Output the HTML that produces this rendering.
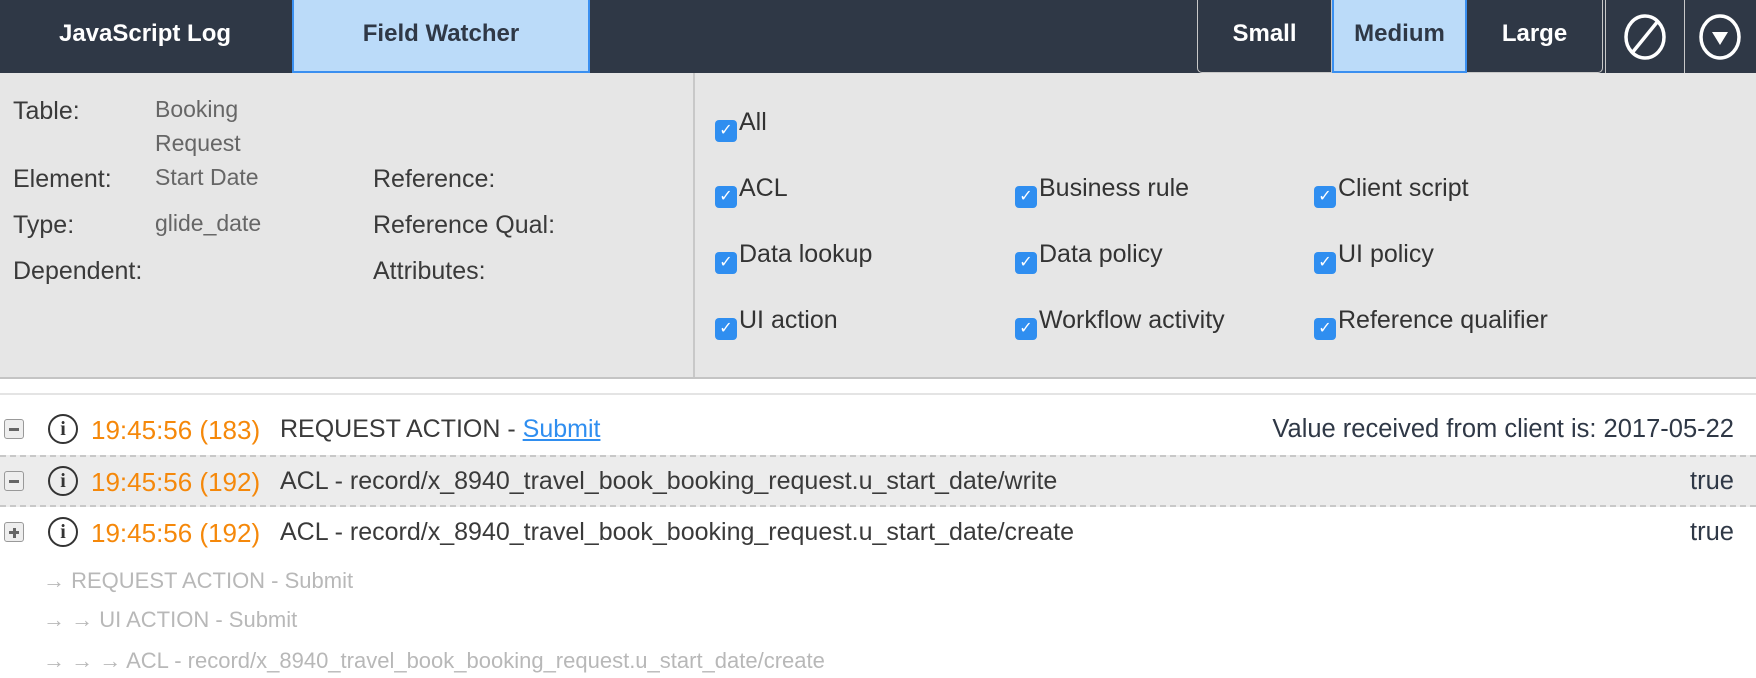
<!DOCTYPE html>
<html><head><meta charset="utf-8"><style>
*{margin:0;padding:0;box-sizing:border-box}
body{width:1756px;height:678px;overflow:hidden;background:#fff;font-family:"Liberation Sans",Arial,sans-serif;position:relative}
.a{position:absolute;white-space:nowrap}
#hdr{position:absolute;left:0;top:0;width:1756px;height:73px;background:#2f3846}
.tab{position:absolute;top:0;height:73px;line-height:67px;text-align:center;font-size:24px;font-weight:bold;color:#fff}
.btn{position:absolute;top:0;height:73px;line-height:68px;text-align:center;font-size:24px;font-weight:bold;color:#fff;border:1px solid #c8c8c8;border-top:none}
.sel{background:#bbdbf9;color:#2f3846;border:2px solid #3a8ff0;border-top:none}
#panel{position:absolute;left:0;top:73px;width:1756px;height:306px;background:#e6e6e6;border-bottom:2px solid #c4c4c4}
.lbl{font-size:25px;color:#3a3a3a}
.val{font-size:23px;color:#666}
.cb{position:absolute;font-size:25px;color:#333;white-space:nowrap}
.cb i{position:absolute;left:0;top:12px;width:22px;height:22px;background:#2f8ef0;border-radius:4px;color:#fff;font-style:normal;font-size:16px;text-align:center;line-height:22px}
.cb span{position:absolute;left:24px;top:0;white-space:nowrap}
.row{position:absolute;left:0;width:1756px;height:51px;font-size:25px;color:#3a3a3a;white-space:nowrap}
.ts{position:absolute;left:91px;top:12px;color:#f5880a;font-size:26px}
.msg{position:absolute;left:280px;top:12px}
.rt{position:absolute;right:22px;top:12px;color:#2f3846;font-size:25.5px}
.box{position:absolute;left:4px;top:16px;width:20px;height:20px;border:1px solid #999;border-radius:3px;background:#eee}
.box:after{content:"";position:absolute;left:4px;top:8px;width:10px;height:3px;background:#666}
.plus:before{content:"";position:absolute;left:7.5px;top:4.5px;width:3px;height:10px;background:#666}
.inf{position:absolute;left:48px;top:11px;width:30px;height:30px;border:2.5px solid #333;border-radius:50%;font-family:"Liberation Serif",serif;font-weight:bold;font-size:20px;text-align:center;line-height:26px;color:#333}
.sub{position:absolute;left:43px;font-size:22px;color:#b8b8b8;white-space:nowrap}
</style></head><body>
<div id="hdr">
<div class="tab" style="left:0;width:290px">JavaScript Log</div>
<div class="tab sel" style="left:292px;width:298px">Field Watcher</div>
<div class="btn" style="left:1197px;width:135px;border-radius:0 0 0 5px">Small</div>
<div class="btn sel" style="left:1332px;width:135px">Medium</div>
<div class="btn" style="left:1467px;width:136px;border-radius:0 0 5px 0;border-left:none">Large</div>
<div class="a" style="left:1605px;top:0;width:1px;height:73px;background:#c8c8c8"></div>
<div class="a" style="left:1684px;top:0;width:1px;height:73px;background:#c8c8c8"></div>
<svg class="a" style="left:1622px;top:13px" width="46" height="48" viewBox="0 0 46 48"><ellipse cx="23" cy="24" rx="19" ry="21" fill="none" stroke="#fff" stroke-width="3.5"/><line x1="10" y1="40" x2="36" y2="8" stroke="#fff" stroke-width="3.5"/></svg>
<svg class="a" style="left:1697px;top:13px" width="46" height="48" viewBox="0 0 46 48"><ellipse cx="23" cy="24" rx="19" ry="21" fill="none" stroke="#fff" stroke-width="3.5"/><path d="M15 19h16l-8 13z" fill="#fff"/></svg>
</div>
<div id="panel">
<div class="a lbl" style="left:13px;top:24px">Table:</div>
<div class="a val" style="left:155px;top:23px">Booking</div>
<div class="a val" style="left:155px;top:57px">Request</div>
<div class="a lbl" style="left:13px;top:92px">Element:</div>
<div class="a val" style="left:155px;top:91px">Start Date</div>
<div class="a lbl" style="left:373px;top:92px">Reference:</div>
<div class="a lbl" style="left:13px;top:138px">Type:</div>
<div class="a val" style="left:155px;top:137px">glide_date</div>
<div class="a lbl" style="left:373px;top:138px">Reference Qual:</div>
<div class="a lbl" style="left:13px;top:184px">Dependent:</div>
<div class="a lbl" style="left:373px;top:184px">Attributes:</div>
<div class="a" style="left:693px;top:0;width:2px;height:304px;background:#c8c8c8"></div>
<div class="cb" style="left:715px;top:35px"><i>✓</i><span>All</span></div>
<div class="cb" style="left:715px;top:101px"><i>✓</i><span>ACL</span></div>
<div class="cb" style="left:1015px;top:101px"><i>✓</i><span>Business rule</span></div>
<div class="cb" style="left:1314px;top:101px"><i>✓</i><span>Client script</span></div>
<div class="cb" style="left:715px;top:167px"><i>✓</i><span>Data lookup</span></div>
<div class="cb" style="left:1015px;top:167px"><i>✓</i><span>Data policy</span></div>
<div class="cb" style="left:1314px;top:167px"><i>✓</i><span>UI policy</span></div>
<div class="cb" style="left:715px;top:233px"><i>✓</i><span>UI action</span></div>
<div class="cb" style="left:1015px;top:233px"><i>✓</i><span>Workflow activity</span></div>
<div class="cb" style="left:1314px;top:233px"><i>✓</i><span>Reference qualifier</span></div>
</div>
<div class="a" style="left:0;top:393px;width:1756px;height:2px;background:#e4e4e4"></div>
<div class="row" style="top:403px"><div class="box"></div><div class="inf">i</div><div class="ts">19:45:56 (183)</div><div class="msg">REQUEST ACTION - <span style="color:#2f8ef0;text-decoration:underline">Submit</span></div><div class="rt">Value received from client is: 2017-05-22</div></div>
<div class="row" style="top:455px;background:#ececec;border-top:2px dashed #c8c8c8;border-bottom:2px dashed #c8c8c8;height:52px"><div class="box" style="top:14px"></div><div class="inf" style="top:9px">i</div><div class="ts" style="top:10px">19:45:56 (192)</div><div class="msg" style="top:10px">ACL - record/x_8940_travel_book_booking_request.u_start_date/write</div><div class="rt" style="top:10px">true</div></div>
<div class="row" style="top:507px"><div class="box plus" style="top:15px"></div><div class="inf" style="top:10px">i</div><div class="ts" style="top:11px">19:45:56 (192)</div><div class="msg" style="top:11px">ACL - record/x_8940_travel_book_booking_request.u_start_date/create</div><div class="rt" style="top:11px">true</div></div>
<div class="sub" style="top:568px">→ REQUEST ACTION - Submit</div>
<div class="sub" style="top:607px">→ → UI ACTION - Submit</div>
<div class="sub" style="top:648px">→ → → ACL - record/x_8940_travel_book_booking_request.u_start_date/create</div>
</body></html>
